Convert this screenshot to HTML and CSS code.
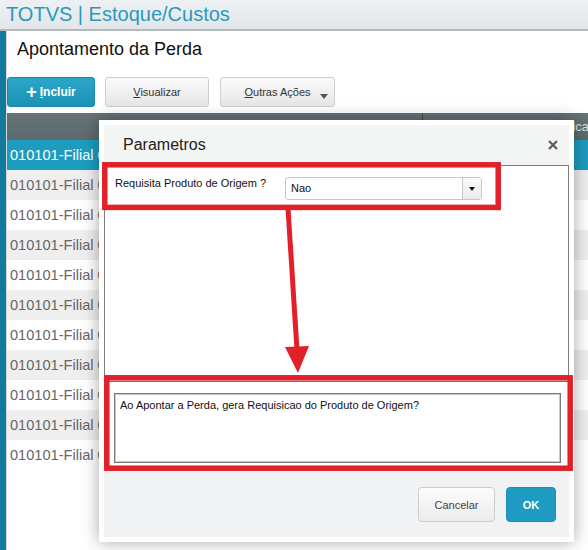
FILE: index.html
```html
<!DOCTYPE html>
<html lang="pt-BR">
<head>
    <meta charset="UTF-8">
    <meta name="viewport" content="width=device-width, initial-scale=1.0">
    <title>TOTVS | Estoque/Custos</title>
    <link rel="stylesheet" href="styles.css">
</head>
<body>
    <div class="topbar">TOTVS | Estoque/Custos</div>

    <div class="app">
        <div class="rail"></div>
        <div class="main">
            <h1 class="page-title">Apontamento da Perda</h1>

            <div class="toolbar">
                <button class="btn btn-primary btn-incluir"><span class="plus">+</span><span><u>I</u>ncluir</span></button>
                <button class="btn btn-visualizar"><span><u>V</u>isualizar</span></button>
                <button class="btn btn-outras"><span><u>O</u>utras Ações</span><span class="caret"></span></button>
            </div>

            <div class="grid">
                <div class="grid-head">
                    <div class="col col-filial"></div>
                    <div class="col col-desc">Identificacao</div>
                </div>
                <div class="grid-body">
                    <div class="row selected">010101-Filial 01</div>
                    <div class="row">010101-Filial 01</div>
                    <div class="row">010101-Filial 01</div>
                    <div class="row">010101-Filial 01</div>
                    <div class="row">010101-Filial 01</div>
                    <div class="row">010101-Filial 01</div>
                    <div class="row">010101-Filial 01</div>
                    <div class="row">010101-Filial 01</div>
                    <div class="row">010101-Filial 01</div>
                    <div class="row">010101-Filial 01</div>
                    <div class="row">010101-Filial 01</div>
                </div>
            </div>
        </div>
    </div>

    <!-- dialogo de parametros -->
    <div class="modal">
        <div class="modal-header">
            <span class="modal-title">Parametros</span>
            <svg class="modal-close" width="10" height="10" viewBox="0 0 10 10">
                <path d="M1 1 L9 9 M9 1 L1 9" stroke="#5a5a5a" stroke-width="2.2" fill="none"/>
            </svg>
        </div>
        <div class="modal-body">
            <div class="param-row">
                <label class="param-label">Requisita Produto de Origem ?</label>
                <div class="select">
                    <span class="select-value">Nao</span>
                    <span class="select-btn"><span class="select-caret"></span></span>
                </div>
            </div>
        </div>
        <div class="help-panel">
            <div class="help-text">Ao Apontar a Perda, gera Requisicao do Produto de Origem?</div>
        </div>
        <div class="modal-footer">
            <button class="btn btn-cancel">Cancelar</button>
            <button class="btn btn-primary btn-ok">OK</button>
        </div>
    </div>

    <!-- marcacoes em vermelho -->
    <svg class="marks" width="588" height="550" viewBox="0 0 588 550">
        <rect x="104.8" y="164.8" width="393.4" height="42.6" fill="none" stroke="#e1202a" stroke-width="5.5"/>
        <rect x="106.8" y="377.8" width="463.4" height="90.4" fill="none" stroke="#e1202a" stroke-width="5.5"/>
        <line x1="288" y1="208" x2="297" y2="350" stroke="#e1202a" stroke-width="5"/>
        <polygon points="285,347 309,346 298,373" fill="#e1202a"/>
    </svg>
</body>
</html>
```

FILE: styles.css
```css
* {
    box-sizing: border-box;
}

body {
    margin: 0;
    width: 588px;
    height: 550px;
    overflow: hidden;
    position: relative;
    font-family: 'Liberation Sans', Arial, sans-serif;
    background: #ffffff;
}

.topbar {
    height: 31px;
    padding-left: 6px;
    font-size: 20px;
    line-height: 28px;
    color: #2a98bd;
    background: linear-gradient(#eef1f3, #e2e6e9);
    border-bottom: 2px solid #b4b9bc;
}

.app {
    display: flex;
    height: 519px;
}

.rail {
    width: 6px;
    background: #147a9c;
    border-right: 1px solid #d3d8db;
    flex: none;
    box-sizing: content-box;
}

.main {
    flex: 1;
    display: flex;
    flex-direction: column;
    background: #ffffff;
}

.page-title {
    margin: 0;
    height: 46px;
    padding: 7px 0 0 10px;
    font-size: 18px;
    font-weight: normal;
    line-height: 22px;
    color: #111;
}

.toolbar {
    display: flex;
    height: 36px;
    gap: 10px;
}

.btn {
    font-family: 'Liberation Sans', Arial, sans-serif;
    font-size: 11px;
    border-radius: 3px;
    cursor: pointer;
    display: flex;
    align-items: center;
    justify-content: center;
    padding: 0;
}

.btn-primary {
    background: linear-gradient(#2ba6c9, #1b91b5);
    border: 1px solid #1a88aa;
    color: #ffffff;
    font-weight: bold;
}

.toolbar .btn {
    height: 30px;
    color: #333;
    background: linear-gradient(#fafafa, #e6e6e6);
    border: 1px solid #cfcfcf;
}

.toolbar .btn-primary {
    background: linear-gradient(#2ba6c9, #1b91b5);
    border: 1px solid #1a88aa;
    color: #ffffff;
    font-size: 12px;
}

.btn-incluir {
    width: 88px;
    gap: 3px;
}

.plus {
    font-size: 18px;
    line-height: 14px;
    font-weight: bold;
}

.btn-visualizar {
    width: 104px;
}

.btn-outras {
    width: 115px;
    position: relative;
    margin-left: 1px;
}

.caret {
    position: absolute;
    right: 6px;
    bottom: 7px;
    border-left: 4px solid transparent;
    border-right: 4px solid transparent;
    border-top: 5px solid #555;
}

.grid {
    flex: 1;
}

.grid-head {
    display: flex;
    height: 27px;
    background: linear-gradient(#667377, #5c696e);
    font-size: 13px;
    color: #dde2e3;
    line-height: 27px;
}

.col-filial {
    width: 416px;
    border-right: 1px solid #3b4548;
}

.col-desc {
    flex: 1;
    padding-left: 114px;
    white-space: nowrap;
    overflow: hidden;
}

.row {
    height: 30px;
    line-height: 30px;
    padding-left: 3px;
    font-size: 14.6px;
    color: #666;
    white-space: nowrap;
    background: #ffffff;
}

.row:nth-child(even) {
    background: #efefef;
}

.row.selected {
    background: #1d9cc0;
    color: #ffffff;
}

/* dialogo */
.modal {
    position: absolute;
    left: 99px;
    top: 120px;
    width: 475px;
    height: 422px;
    background: #f1f2f3;
    border: 5px solid #ffffff;
    box-shadow: 0 0 16px rgba(0, 0, 0, 0.35);
    display: flex;
    flex-direction: column;
}

.modal-header {
    height: 40px;
    flex: none;
    display: flex;
    align-items: center;
    justify-content: space-between;
    padding: 0 11px 0 19px;
    background: #f3f4f4;
}

.modal-title {
    font-size: 16px;
    color: #222;
}

.modal-body {
    height: 213px;
    flex: none;
    background: #ffffff;
    border: 1px solid #7d7d7d;
    padding: 11px 0 0 10px;
}

.param-row {
    display: flex;
    align-items: flex-start;
}

.param-label {
    width: 170px;
    font-size: 11px;
    line-height: 13px;
    color: #111;
}

.select {
    width: 197px;
    height: 23px;
    display: flex;
    border: 1px solid #c6c6c6;
    border-radius: 3px;
    background: #ffffff;
}

.select-value {
    flex: 1;
    font-size: 11px;
    line-height: 21px;
    padding-left: 5px;
    color: #111;
}

.select-btn {
    width: 19px;
    border-left: 1px solid #c6c6c6;
    background: linear-gradient(#fbfbfb, #ececec);
    display: flex;
    align-items: center;
    justify-content: center;
}

.select-caret {
    border-left: 3px solid transparent;
    border-right: 3px solid transparent;
    border-top: 4px solid #111;
}

.help-panel {
    height: 86px;
    flex: none;
    margin-top: 3px;
    background: #ffffff;
    border: 1px solid #6e6e6e;
    padding: 11px 7px 0 9px;
}

.help-text {
    height: 70px;
    border: 1px solid #7a7a7a;
    box-shadow: inset 0 0 0 1px #c9c9c9;
    padding: 5px 5px;
    font-size: 11px;
    line-height: 13px;
    color: #111;
}

.modal-footer {
    flex: 1;
    display: flex;
    justify-content: flex-end;
    align-items: flex-start;
    gap: 11px;
    padding: 20px 13px 0 0;
}

.btn-cancel {
    width: 77px;
    height: 35px;
    color: #444;
    background: linear-gradient(#fdfdfd, #ebebeb);
    border: 1px solid #cdcdcd;
    border-radius: 4px;
}

.btn-ok {
    width: 50px;
    height: 35px;
    border-radius: 4px;
    background: #1f9bc1;
    border: 1px solid #1b8fb3;
}

.marks {
    position: absolute;
    left: 0;
    top: 0;
    pointer-events: none;
}
```
